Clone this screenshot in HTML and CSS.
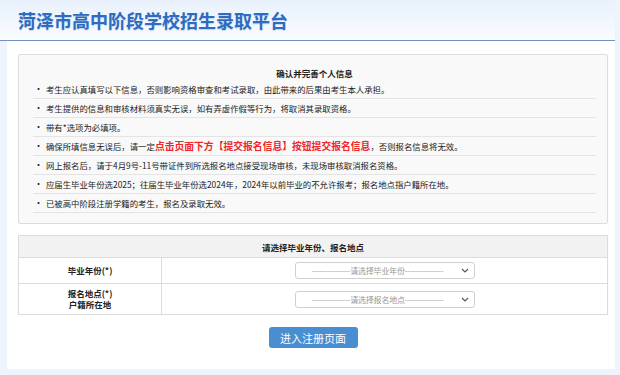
FILE: index.html
```html
<!DOCTYPE html>
<html lang="zh-CN">
<head>
    <meta charset="UTF-8">
    <meta name="viewport" content="width=device-width, initial-scale=1.0">
    <title>菏泽市高中阶段学校招生录取平台</title>
    <link rel="stylesheet" href="styles.css">
</head>
<body>
    <div class="page">
        <div class="header">
            <h1>菏泽市高中阶段学校招生录取平台</h1>
        </div>
        <div class="main">
            <div class="notice">
                <div class="notice-title">确认并完善个人信息</div>
                <ul class="notice-list">
                    <li>考生应认真填写以下信息，否则影响资格审查和考试录取，由此带来的后果由考生本人承担。</li>
                    <li>考生提供的信息和审核材料须真实无误，如有弄虚作假等行为，将取消其录取资格。</li>
                    <li>带有*选项为必填项。</li>
                    <li>确保所填信息无误后，请一定<span class="red">点击页面下方【提交报名信息】按钮提交报名信息</span>，否则报名信息将无效。</li>
                    <li>网上报名后，请于4月9号-11号带证件到所选报名地点接受现场审核，未现场审核取消报名资格。</li>
                    <li>应届生毕业年份选2025；往届生毕业年份选2024年，2024年以前毕业的不允许报考；报名地点指户籍所在地。</li>
                    <li>已被高中阶段注册学籍的考生，报名及录取无效。</li>
                </ul>
            </div>
            <table class="form-table">
                <tr class="head-row">
                    <th colspan="2">请选择毕业年份、报名地点</th>
                </tr>
                <tr class="row-year">
                    <td class="label">毕业年份(*)</td>
                    <td class="field">
                        <div class="select-wrap">
                            <select id="year">
                                <option value="">---------------请选择毕业年份---------------</option>
                                <option value="2025">2025</option>
                                <option value="2024">2024</option>
                            </select>
                            <svg class="chevron" width="8" height="5" viewBox="0 0 8 5"><path d="M1 1 L4 4 L7 1" fill="none" stroke="#555" stroke-width="1.1"/></svg>
                        </div>
                    </td>
                </tr>
                <tr class="row-place">
                    <td class="label">报名地点(*)<br>户籍所在地</td>
                    <td class="field">
                        <div class="select-wrap">
                            <select id="place">
                                <option value="">---------------请选择报名地点---------------</option>
                            </select>
                            <svg class="chevron" width="8" height="5" viewBox="0 0 8 5"><path d="M1 1 L4 4 L7 1" fill="none" stroke="#555" stroke-width="1.1"/></svg>
                        </div>
                    </td>
                </tr>
            </table>
            <div class="actions">
                <button type="button" class="btn">进入注册页面</button>
            </div>
        </div>
    </div>
</body>
</html>
```

FILE: styles.css
```css
body {
    margin: 0;
    background: #eef4fc;
    font-family: "Noto Sans CJK SC", "Liberation Sans", sans-serif;
    color: #222;
}
.page {
    margin: 0 5px 0 7px;
}
.header {
    height: 40px;
    background: linear-gradient(180deg, #e8f1fc 0%, #fafcff 100%);
    border-bottom: 1.5px solid #7292b9;
    margin-left: -7px;
    padding-left: 18px;
    display: flex;
    align-items: center;
}
.header h1 {
    margin: 0;
    font-size: 18px;
    font-weight: bold;
    color: #2d6cc1;
    text-shadow: 0 1px 1px #c3d5ea;
}
.main {
    background: #fff;
    padding: 13px 7px 21px 11px;
}
.notice {
    background: #f9f9f9;
    border: 1px solid #dcdcdc;
    border-radius: 2px;
    padding: 11px 11px 10px 14px;
}
.notice-title {
    text-align: center;
    font-size: 8.5px;
    font-weight: bold;
    line-height: 14px;
}
.notice-list {
    list-style: none;
    margin: 0;
    padding: 0;
}
.notice-list li {
    font-size: 8.4px;
    line-height: 18px;
    border-bottom: 1px solid #e4e4e4;
    display: flex;
    white-space: nowrap;
}
.notice-list li::before {
    content: "•";
    width: 12px;
    padding-left: 1px;
    flex-shrink: 0;
    font-size: 9px;
}
.red {
    color: #f0262b;
    font-size: 9.8px;
    font-weight: bold;
}
.form-table {
    width: 100%;
    margin-top: 11px;
    border-collapse: collapse;
    font-size: 8.5px;
}
.form-table th,
.form-table td {
    border: 1px solid #dcdcdc;
    padding: 0;
}
.head-row th {
    background: #f2f2f2;
    height: 21px;
    font-weight: bold;
}
.form-table .label {
    width: 142px;
    text-align: center;
    font-weight: bold;
    line-height: 11px;
}
.row-year td {
    height: 25px;
}
.row-place td {
    height: 30px;
}
.field {
    text-align: center;
}
.select-wrap {
    position: relative;
    display: inline-block;
    vertical-align: middle;
}
.select-wrap select {
    appearance: none;
    -webkit-appearance: none;
    width: 180px;
    height: 17px;
    border: 1px solid #cfcfcf;
    border-radius: 3px;
    background: #fff;
    color: #999;
    font-family: "Noto Sans CJK SC", "Liberation Sans", sans-serif;
    font-size: 8px;
    padding: 0 18px 0 4px;
    text-align-last: center;
    letter-spacing: -0.2px;
}
.chevron {
    position: absolute;
    right: 6px;
    top: 6px;
    pointer-events: none;
}
.actions {
    display: flex;
    justify-content: center;
    margin-top: 12px;
}
.btn {
    width: 89px;
    height: 21px;
    border: none;
    border-radius: 3px;
    background: #4a8ed2;
    color: #fff;
    font-family: "Noto Sans CJK SC", "Liberation Sans", sans-serif;
    font-size: 11px;
    padding: 0;
    cursor: pointer;
}
```
